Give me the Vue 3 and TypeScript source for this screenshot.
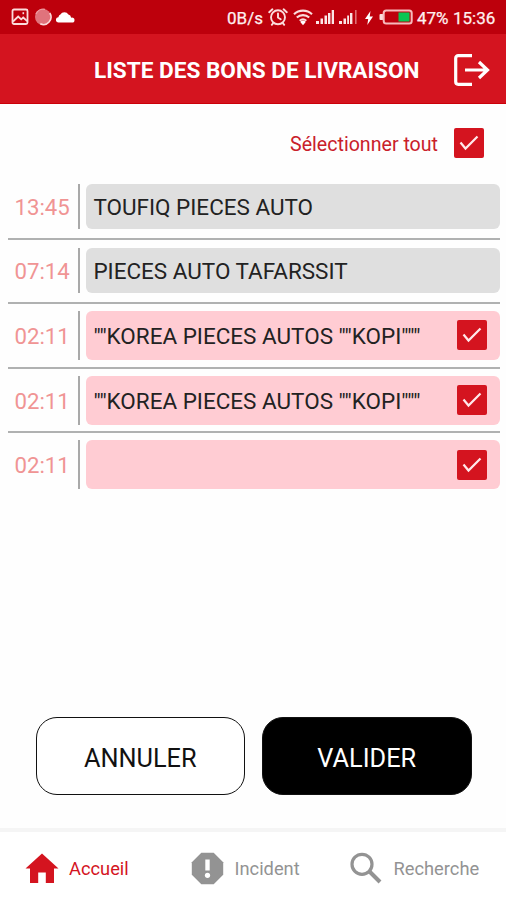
<script setup lang="ts">
import { ref, computed } from 'vue'

interface Delivery {
  id: number
  time: string
  client: string
  selectable: boolean
  checked: boolean
}

const deliveries = ref<Delivery[]>([
  { id: 1, time: '13:45', client: 'TOUFIQ PIECES AUTO', selectable: false, checked: false },
  { id: 2, time: '07:14', client: 'PIECES AUTO TAFARSSIT', selectable: false, checked: false },
  { id: 3, time: '02:11', client: '""KOREA PIECES AUTOS ""KOPI"""', selectable: true, checked: true },
  { id: 4, time: '02:11', client: '""KOREA PIECES AUTOS ""KOPI"""', selectable: true, checked: true },
  { id: 5, time: '02:11', client: '', selectable: true, checked: true },
])

const allChecked = computed(() => deliveries.value.every((d) => !d.selectable || d.checked))

function setAll(value: boolean) {
  deliveries.value.forEach((d) => {
    if (d.selectable) d.checked = value
  })
}
</script>

<template>
  <div class="screen">
    <div class="status">
      <div class="status-left">
        <svg width="18" height="18" viewBox="0 0 18 18" fill="none" stroke="#fbdcdc" stroke-width="1.8">
          <rect x="1.5" y="1.5" width="15" height="14.5" rx="1.5" />
          <path d="M2 13.5l5.2-5 3 2.8 2-1.8 4 3.6" />
          <path d="M11.5 5.2h1.6" stroke-width="2" />
        </svg>
        <svg width="18" height="18" viewBox="0 0 18 18">
          <circle cx="9" cy="9" r="8" fill="#e0737c" />
          <path d="M15.800 5a7.500 7.500 0 0 1-9.500 10.800" fill="none" stroke="#fbdcdc" stroke-width="1.5" />
          <path d="M2 6a8 8 0 0 1 9-4.6" fill="none" stroke="#ee9da3" stroke-width="1.4" />
        </svg>
        <svg class="cloud" width="19" height="12" viewBox="0 0 19 12" fill="#fff">
          <path d="M2.600 11.500a2.600 2.600 0 0 1-.2-5.200 3.500 3.500 0 0 1 2-2.700A4.500 4.500 0 0 1 12.400 3.600a4 4 0 0 1 2.800 3.100 2.500 2.500 0 0 1 3.300 2.500c0 1.500-.8 2.300-2.300 2.300z" />
        </svg>
      </div>
      <div class="status-right">
        <span class="st-text rate">0B/s</span>
        <svg width="20" height="18" viewBox="0 0 20 18" fill="none" stroke="#fbdcdc" stroke-width="1.9" stroke-linecap="round">
          <circle cx="10" cy="9.3" r="7" />
          <path d="M10 5.500v4l2.700 1.700M1.200 4.200l3.200-2.900M18.800 4.200l-3.200-2.900M5 15.300l-1.200 1.500M15 15.300l1.200 1.500" />
        </svg>
        <svg class="wifi" width="20" height="17" viewBox="0 0 20 17" fill="none" stroke="#fbdcdc" stroke-width="2.1">
          <path d="M1 5.200a13 13 0 0 1 18 0M3.800 8.600a9 9 0 0 1 12.400 0M6.700 11.700a5 5 0 0 1 6.600 0" />
          <path d="M7.300 13a3.300 3.300 0 0 1 5.400 0L10 16.200z" fill="#fff" stroke="none" />
        </svg>
        <svg class="signal" width="18" height="16" viewBox="0 0 18 16" fill="#fbe6e6">
          <path d="M0 12h3v3H0zM4.500 9.500h2.500V15H4.500zM8.500 6.500H11V15H8.500zM12 4h2.400v11H12zM15.700 1H18v14h-2.300z" />
        </svg>
        <svg class="signal two" width="18" height="16" viewBox="0 0 18 16" fill="#fbe6e6">
          <path d="M0 12h3v3H0zM4.500 9.500h2.500V15H4.500zM8.200 6.500h1.800V15H8.200zM11 4h2.400v11H11z" />
          <path d="M16 1h1.600v14H16z" fill="#de6f75" />
        </svg>
        <svg class="bolt" width="8" height="14" viewBox="0 0 8 14" fill="#fff">
          <path d="M5.500 0L0 8h3.200L2.300 14 8 5.500H4.700z" />
        </svg>
        <svg class="battery" width="34" height="16" viewBox="0 0 34 16">
          <rect x=".5" y="5" width="4" height="6" rx="1" fill="#fbdcdc" />
          <rect x="4.700" y="1.500" width="28" height="13" rx="2.500" fill="none" stroke="#f7b9bc" stroke-width="2" />
          <rect x="19.500" y="3.500" width="11" height="9" fill="#08c653" />
        </svg>
        <span class="st-text percent">47%</span>
        <span class="st-text clock">15:36</span>
      </div>
    </div>

    <header class="header">
      <h1 class="title">LISTE DES BONS DE LIVRAISON</h1>
      <svg class="logout" width="36" height="32" viewBox="0 0 36 32" fill="none" stroke="#fff" stroke-width="3.200">
        <path d="M18 1.700H4.200A2.500 2.500 0 0 0 1.700 4.200v23.600a2.500 2.500 0 0 0 2.500 2.500H18" />
        <path d="M11 16h23M25 8l8.500 8-8.500 8" />
      </svg>
    </header>

    <div class="select-all" @click="setAll(!allChecked)">
      <span class="select-label">Sélectionner tout</span>
      <span class="check" :class="{ off: !allChecked }">
        <svg v-if="allChecked" width="30" height="30" viewBox="0 0 30 30">
          <path d="M6.500 14.500l5 6L23.500 8.500" />
        </svg>
      </span>
    </div>

    <ul class="list">
      <li v-for="d in deliveries" :key="d.id" class="row" :class="{ selectable: d.selectable }">
        <span class="time">{{ d.time }}</span>
        <div class="card" @click="d.selectable && (d.checked = !d.checked)">
          <span class="client">{{ d.client }}</span>
          <span v-if="d.selectable" class="check" :class="{ off: !d.checked }">
            <svg v-if="d.checked" width="30" height="30" viewBox="0 0 30 30">
              <path d="M6.500 14.500l5 6L23.500 8.500" />
            </svg>
          </span>
        </div>
      </li>
    </ul>

    <div class="actions">
      <button class="btn" @click="setAll(false)">ANNULER</button>
      <button class="btn primary">VALIDER</button>
    </div>

    <nav class="nav">
      <a class="item active">
        <svg width="34" height="31" viewBox="0 0 34 31" fill="currentColor">
          <path d="M17 .5L33.500 15.500H29V30h-8.200V19.500h-7.600V30H5V15.500H.5z" />
        </svg>
        <span class="nav-text home">Accueil</span>
      </a>
      <a class="item">
        <svg width="33" height="33" viewBox="0 0 33 33">
          <path d="M10.300.8h12.400l9.500 9.500v12.400l-9.500 9.500H10.300L.8 22.700V10.300z" fill="currentColor" />
          <path d="M14.300 7.500h4.400v11h-4.400z" fill="#fff" />
          <circle cx="16.500" cy="23.300" r="2.600" fill="#fff" />
        </svg>
        <span class="nav-text incident">Incident</span>
      </a>
      <a class="item">
        <svg width="32" height="32" viewBox="0 0 32 32" fill="none" stroke="currentColor">
          <circle cx="12" cy="12.300" r="10" stroke-width="3.200" />
          <path d="M19.500 19.500l10.500 10.500" stroke-width="4" />
        </svg>
        <span class="nav-text search">Recherche</span>
      </a>
    </nav>
  </div>
</template>

<style>
body {
  margin: 0;
  background: #fefefe;
}
</style>

<style scoped>
.screen {
  display: flex;
  flex-direction: column;
  box-sizing: border-box;
  width: 506px;
  height: 900px;
  overflow: hidden;
  background: #fefefe;
  font-family: Roboto, 'Liberation Sans', sans-serif;
}
.screen svg {
  display: block;
  flex: none;
}
.status {
  display: flex;
  justify-content: space-between;
  flex: none;
  height: 34px;
  box-sizing: border-box;
  padding: 0 11px 0 11px;
  background: #bd000c;
}
.status-left,
.status-right {
  display: flex;
  align-items: center;
}
.status-left {
  gap: 4.5px;
}
.cloud {
  margin-top: -1px;
}
.st-text {
  color: #fff0f0;
  font-size: 17px;
  line-height: 20px;
  white-space: nowrap;
  padding-top: 1px;
  -webkit-text-stroke: 0.25px #fff0f0;
}
.rate {
  width: 36px;
  margin-right: 5px;
}
.wifi {
  margin-left: 5px;
}
.signal {
  margin-left: 3px;
}
.signal.two {
  margin-left: 5px;
}
.bolt {
  margin: 2px 0 0 8px;
}
.battery {
  margin-left: 6px;
}
.percent {
  width: 32px;
  margin-left: 4px;
}
.clock {
  width: 42px;
  margin-left: 4px;
}
.header {
  display: flex;
  align-items: center;
  flex: none;
  height: 70px;
  box-sizing: border-box;
  border-bottom: 1px solid #cb0009;
  padding: 2px 16px 0 94px;
  background: #d4141f;
}
.title {
  flex: 1;
  margin: 0;
  padding-top: 2px;
  color: #fff;
  font-size: 22.58px;
  font-weight: 700;
  line-height: 28px;
  white-space: nowrap;
}
.select-all {
  display: flex;
  align-items: center;
  justify-content: flex-end;
  gap: 16px;
  flex: none;
  height: 71px;
  box-sizing: border-box;
  padding: 7px 22px 0 0;
}
.select-label {
  color: #c9202a;
  font-size: 19.6px;
  line-height: 24px;
  padding-top: 4px;
}
.check {
  flex: none;
  width: 30px;
  height: 30px;
  border-radius: 2px;
  background: #d4141f;
}
.check path {
  fill: none;
  stroke: #ffe9eb;
  stroke-width: 2.2;
}
.check.off {
  box-sizing: border-box;
  border: 2px solid #d4141f;
  background: transparent;
}
.list {
  flex: none;
  margin: 0;
  padding: 0 6px 0 8px;
  list-style: none;
}
.row {
  display: flex;
  align-items: center;
  height: 64.6px;
  box-sizing: border-box;
  border-bottom: 2px solid #b0b1b1;
}
.row:last-child {
  border-bottom-color: transparent;
}
.time {
  width: 72px;
  height: 45px;
  box-sizing: border-box;
  border-right: 2px solid #a9a9a9;
  padding-left: 6.5px;
  color: #f09494;
  font-size: 22.2px;
  line-height: 47px;
  white-space: nowrap;
}
.card {
  display: flex;
  align-items: center;
  justify-content: space-between;
  flex: 1;
  height: 45px;
  box-sizing: border-box;
  margin-left: 6px;
  border-radius: 6px;
  padding: 0 13px 0 7.4px;
  background: #dfdfdf;
}
.client {
  color: #222;
  font-size: 22.47px;
  line-height: 28px;
  padding-top: 1px;
  white-space: pre;
}
.selectable .card {
  height: 49px;
  background: #ffccd3;
}
.selectable .time {
  height: 49px;
  line-height: 51px;
}
.actions {
  display: flex;
  gap: 17px;
  margin-top: auto;
  padding: 0 34.5px 33px 35.5px;
}
.btn {
  flex: 1;
  height: 78px;
  border: 1px solid #111;
  border-radius: 21px;
  padding: 4px 0 0;
  background: #fff;
  color: #111;
  font-family: inherit;
  font-size: 25.3px;
}
.btn.primary {
  background: #000;
  color: #fff;
}
.nav {
  display: flex;
  align-items: center;
  flex: none;
  height: 72px;
  box-sizing: border-box;
  border-top: 4px solid #f5f5f5;
  padding: 4px 0 0 25px;
  background: #fff;
}
.item {
  display: flex;
  align-items: center;
  color: #939393;
}
.item.active {
  color: #d4141f;
}
.nav-text {
  margin-left: 11px;
  font-size: 18.3px;
  line-height: 24px;
  padding-top: 1px;
  white-space: nowrap;
}
.home {
  margin-left: 10px;
  width: 121.5px;
}
.incident {
  width: 115px;
}
.search {
  margin-left: 12px;
}
</style>
